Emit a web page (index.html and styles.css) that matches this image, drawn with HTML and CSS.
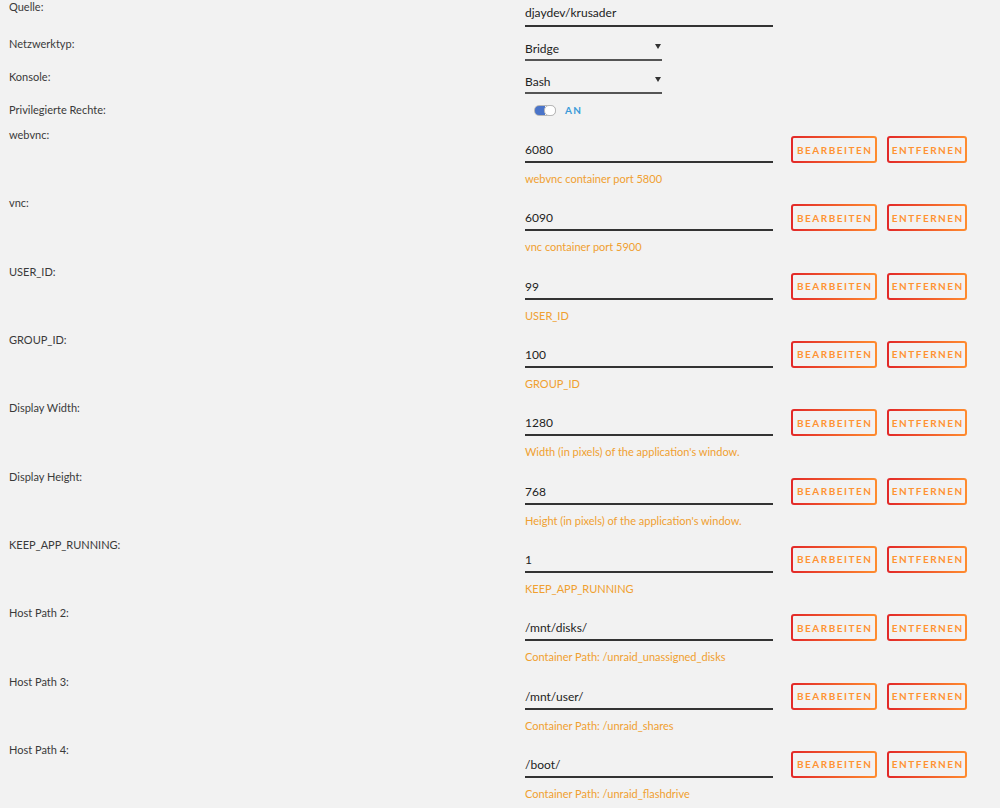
FILE: index.html
```html
<!DOCTYPE html>
<html lang="de">
<head>
  <meta charset="UTF-8" />
  <title>Container bearbeiten</title>
  <link rel="stylesheet" href="styles.css">
</head>
<body>
  <div class="form">
    <div class="row row-top">
      <div class="label">Quelle:</div>
      <div class="field"><input class="text" value="djaydev/krusader"></div>
    </div>
    <div class="row row-select">
      <div class="label">Netzwerktyp:</div>
      <div class="field"><div class="select"><span>Bridge</span><i class="arrow"></i></div></div>
    </div>
    <div class="row row-select">
      <div class="label">Konsole:</div>
      <div class="field"><div class="select"><span>Bash</span><i class="arrow"></i></div></div>
    </div>
    <div class="row row-switch">
      <div class="label">Privilegierte Rechte:</div>
      <div class="field switch-field">
        <span class="switch"><span class="knob"></span></span>
        <span class="switch-text">AN</span>
      </div>
    </div>

    <div class="row row-var">
      <div class="label">webvnc:</div>
      <div class="field">
        <div class="line"><input class="text" value="6080"><button class="btn wide">Bearbeiten</button><button class="btn">Entfernen</button></div>
        <div class="desc">webvnc container port 5800</div>
      </div>
    </div>
    <div class="row row-var">
      <div class="label">vnc:</div>
      <div class="field">
        <div class="line"><input class="text" value="6090"><button class="btn wide">Bearbeiten</button><button class="btn">Entfernen</button></div>
        <div class="desc">vnc container port 5900</div>
      </div>
    </div>
    <div class="row row-var">
      <div class="label">USER_ID:</div>
      <div class="field">
        <div class="line"><input class="text" value="99"><button class="btn wide">Bearbeiten</button><button class="btn">Entfernen</button></div>
        <div class="desc">USER_ID</div>
      </div>
    </div>
    <div class="row row-var">
      <div class="label">GROUP_ID:</div>
      <div class="field">
        <div class="line"><input class="text" value="100"><button class="btn wide">Bearbeiten</button><button class="btn">Entfernen</button></div>
        <div class="desc">GROUP_ID</div>
      </div>
    </div>
    <div class="row row-var">
      <div class="label">Display Width:</div>
      <div class="field">
        <div class="line"><input class="text" value="1280"><button class="btn wide">Bearbeiten</button><button class="btn">Entfernen</button></div>
        <div class="desc">Width (in pixels) of the application's window.</div>
      </div>
    </div>
    <div class="row row-var">
      <div class="label">Display Height:</div>
      <div class="field">
        <div class="line"><input class="text" value="768"><button class="btn wide">Bearbeiten</button><button class="btn">Entfernen</button></div>
        <div class="desc">Height (in pixels) of the application's window.</div>
      </div>
    </div>
    <div class="row row-var">
      <div class="label">KEEP_APP_RUNNING:</div>
      <div class="field">
        <div class="line"><input class="text" value="1"><button class="btn wide">Bearbeiten</button><button class="btn">Entfernen</button></div>
        <div class="desc">KEEP_APP_RUNNING</div>
      </div>
    </div>
    <div class="row row-var">
      <div class="label">Host Path 2:</div>
      <div class="field">
        <div class="line"><input class="text" value="/mnt/disks/"><button class="btn wide">Bearbeiten</button><button class="btn">Entfernen</button></div>
        <div class="desc">Container Path: /unraid_unassigned_disks</div>
      </div>
    </div>
    <div class="row row-var">
      <div class="label">Host Path 3:</div>
      <div class="field">
        <div class="line"><input class="text" value="/mnt/user/"><button class="btn wide">Bearbeiten</button><button class="btn">Entfernen</button></div>
        <div class="desc">Container Path: /unraid_shares</div>
      </div>
    </div>
    <div class="row row-var">
      <div class="label">Host Path 4:</div>
      <div class="field">
        <div class="line"><input class="text" value="/boot/"><button class="btn wide">Bearbeiten</button><button class="btn">Entfernen</button></div>
        <div class="desc">Container Path: /unraid_flashdrive</div>
      </div>
    </div>
  </div>
</body>
</html>
```

FILE: styles.css
```css
body {
  margin: 0;
  background: #f2f2f2;
  font-family: Lato, 'Liberation Sans', sans-serif;
  font-size: 11px;
  color: #333;
}
.form {
  padding-left: 9px;
}
.row {
  display: grid;
  grid-template-columns: 516px 1fr;
  align-items: start;
}
.label {
  line-height: 14px;
  color: #3a3a3a;
}
.row-top {
  margin-bottom: 10px;
}
.row-select {
  margin-bottom: 9px;
}
.row-switch {
  margin-bottom: 11px;
}
.row-var {
  margin-bottom: 10.33px;
}
.row-var .field {
  padding-top: 8px;
}
.line {
  display: flex;
  align-items: flex-start;
}
input.text {
  width: 248px;
  height: 27px;
  box-sizing: border-box;
  margin: 0 18px 0 0;
  padding: 2px 0 0 0;
  border: none;
  border-bottom: 2px solid #333;
  background: transparent;
  font-family: inherit;
  font-size: 12px;
  color: #222;
  outline: none;
}
.row-top input.text {
  padding-top: 0;
}
.select {
  width: 137px;
  height: 24px;
  box-sizing: border-box;
  border-bottom: 2px solid #555;
  display: flex;
  align-items: center;
  justify-content: space-between;
  padding: 1px 1px 0 0;
  font-size: 12px;
  color: #222;
}
.arrow {
  width: 0;
  height: 0;
  border-left: 3px solid transparent;
  border-right: 3px solid transparent;
  border-top: 5px solid #333;
  margin-top: -4px;
}
.switch-field {
  display: flex;
  align-items: center;
  height: 14px;
  padding-left: 9px;
}
.switch {
  width: 22px;
  height: 11px;
  box-sizing: border-box;
  border: 1px solid #b8b8b8;
  border-radius: 5px;
  background: linear-gradient(90deg, #4a74c9 50%, #fff 50%);
  position: relative;
  margin-right: 9px;
}
.knob {
  position: absolute;
  right: -1px;
  top: -1px;
  width: 12px;
  height: 11px;
  box-sizing: border-box;
  border: 1px solid #b8b8b8;
  border-radius: 5px;
  background: #fff;
}
.switch-text {
  color: #3a9ad9;
  font-weight: bold;
  font-size: 10px;
  letter-spacing: 1.2px;
}
.btn {
  height: 27px;
  box-sizing: border-box;
  margin: 0 10px 0 0;
  padding: 0 0 0 1.5px;
  border: 2px solid transparent;
  border-radius: 3px;
  background: linear-gradient(#f2f2f2, #f2f2f2) padding-box,
              linear-gradient(90deg, #e22828, #ff8c2f) border-box;
  color: #ff9233;
  font-family: inherit;
  font-size: 10px;
  font-weight: bold;
  letter-spacing: 1.5px;
  text-align: center;
  text-transform: uppercase;
  cursor: pointer;
}
.btn.wide {
  width: 86px;
}
.btn:not(.wide) {
  width: 80px;
}
.desc {
  margin-top: 9px;
  line-height: 14px;
  color: #f0a030;
}
```
